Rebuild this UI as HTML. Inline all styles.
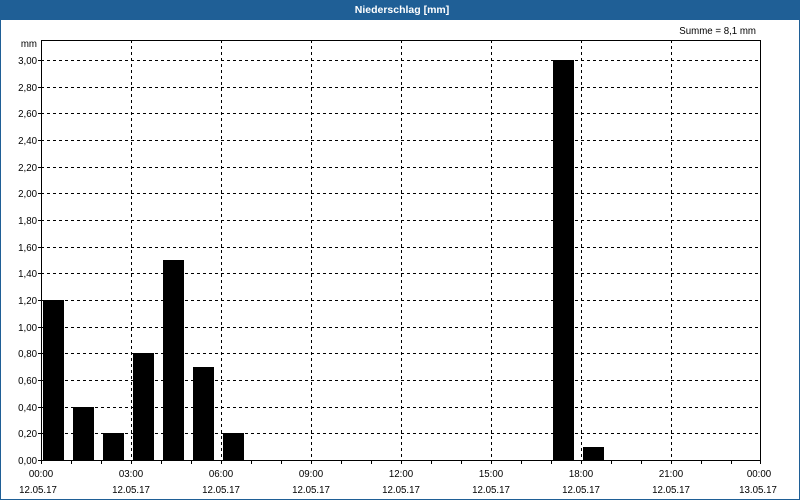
<!DOCTYPE html>
<html><head><meta charset="utf-8"><style>
html,body{margin:0;padding:0;width:800px;height:500px;overflow:hidden;background:#fff}
svg text{font-family:"Liberation Sans",sans-serif;font-size:9.7px;fill:#000}
</style></head><body>
<svg width="800" height="500" xmlns="http://www.w3.org/2000/svg">
<rect x="0" y="0" width="800" height="500" fill="#1f5f96"/>
<rect x="1" y="20" width="798" height="479" fill="#fff"/>
<text x="402" y="13" text-anchor="middle" style="fill:#fff;font-weight:bold;font-size:10.5px">Niederschlag [mm]</text>
<text x="756" y="34" text-anchor="end">Summe = 8,1 mm</text>
<text x="37" y="47" text-anchor="end">mm</text>
<g stroke="#000" stroke-width="1" stroke-dasharray="3,3" shape-rendering="crispEdges">
<path d="M41 60.5H760M41 87.5H760M41 113.5H760M41 140.5H760M41 167.5H760M41 193.5H760M41 220.5H760M41 247.5H760M41 273.5H760M41 300.5H760M41 327.5H760M41 353.5H760M41 380.5H760M41 407.5H760M41 433.5H760"/>
<path d="M131.5 40V460M221.5 40V460M311.5 40V460M401.5 40V460M491.5 40V460M581.5 40V460M671.5 40V460"/>
</g>
<g fill="#000" shape-rendering="crispEdges">
<rect x="43" y="300" width="21" height="160"/>
<rect x="73" y="407" width="21" height="53"/>
<rect x="103" y="433" width="21" height="27"/>
<rect x="133" y="353" width="21" height="107"/>
<rect x="163" y="260" width="21" height="200"/>
<rect x="193" y="367" width="21" height="93"/>
<rect x="223" y="433" width="21" height="27"/>
<rect x="553" y="60" width="21" height="400"/>
<rect x="583" y="447" width="21" height="13"/>
</g>
<rect x="41.5" y="40.5" width="719" height="420" fill="none" stroke="#000" shape-rendering="crispEdges"/>
<g stroke="#000" shape-rendering="crispEdges">
<path d="M41.5 460V464M71.5 460V464M101.5 460V464M131.5 460V464M161.5 460V464M191.5 460V464M221.5 460V464M251.5 460V464M281.5 460V464M311.5 460V464M341.5 460V464M371.5 460V464M401.5 460V464M431.5 460V464M461.5 460V464M491.5 460V464M521.5 460V464M551.5 460V464M581.5 460V464M611.5 460V464M641.5 460V464M671.5 460V464M701.5 460V464M731.5 460V464M760.5 460V464"/>
<path d="M38 60.5H41M38 87.5H41M38 113.5H41M38 140.5H41M38 167.5H41M38 193.5H41M38 220.5H41M38 247.5H41M38 273.5H41M38 300.5H41M38 327.5H41M38 353.5H41M38 380.5H41M38 407.5H41M38 433.5H41M38 460.5H41"/>
</g>
<g text-anchor="end">
<text x="37" y="64">3,00</text><text x="37" y="91">2,80</text><text x="37" y="117">2,60</text>
<text x="37" y="144">2,40</text><text x="37" y="171">2,20</text><text x="37" y="197">2,00</text>
<text x="37" y="224">1,80</text><text x="37" y="251">1,60</text><text x="37" y="277">1,40</text>
<text x="37" y="304">1,20</text><text x="37" y="331">1,00</text><text x="37" y="357">0,80</text>
<text x="37" y="384">0,60</text><text x="37" y="411">0,40</text><text x="37" y="437">0,20</text>
<text x="37" y="464">0,00</text>
</g>
<g text-anchor="middle">
<text x="41" y="477">00:00</text><text x="131" y="477">03:00</text><text x="221" y="477">06:00</text>
<text x="311" y="477">09:00</text><text x="401" y="477">12:00</text><text x="491" y="477">15:00</text>
<text x="581" y="477">18:00</text><text x="671" y="477">21:00</text><text x="759" y="477">00:00</text>
<text x="38" y="493">12.05.17</text><text x="131" y="493">12.05.17</text><text x="221" y="493">12.05.17</text>
<text x="311" y="493">12.05.17</text><text x="401" y="493">12.05.17</text><text x="491" y="493">12.05.17</text>
<text x="581" y="493">12.05.17</text><text x="671" y="493">12.05.17</text><text x="758" y="493">13.05.17</text>
</g>
</svg>
</body></html>
